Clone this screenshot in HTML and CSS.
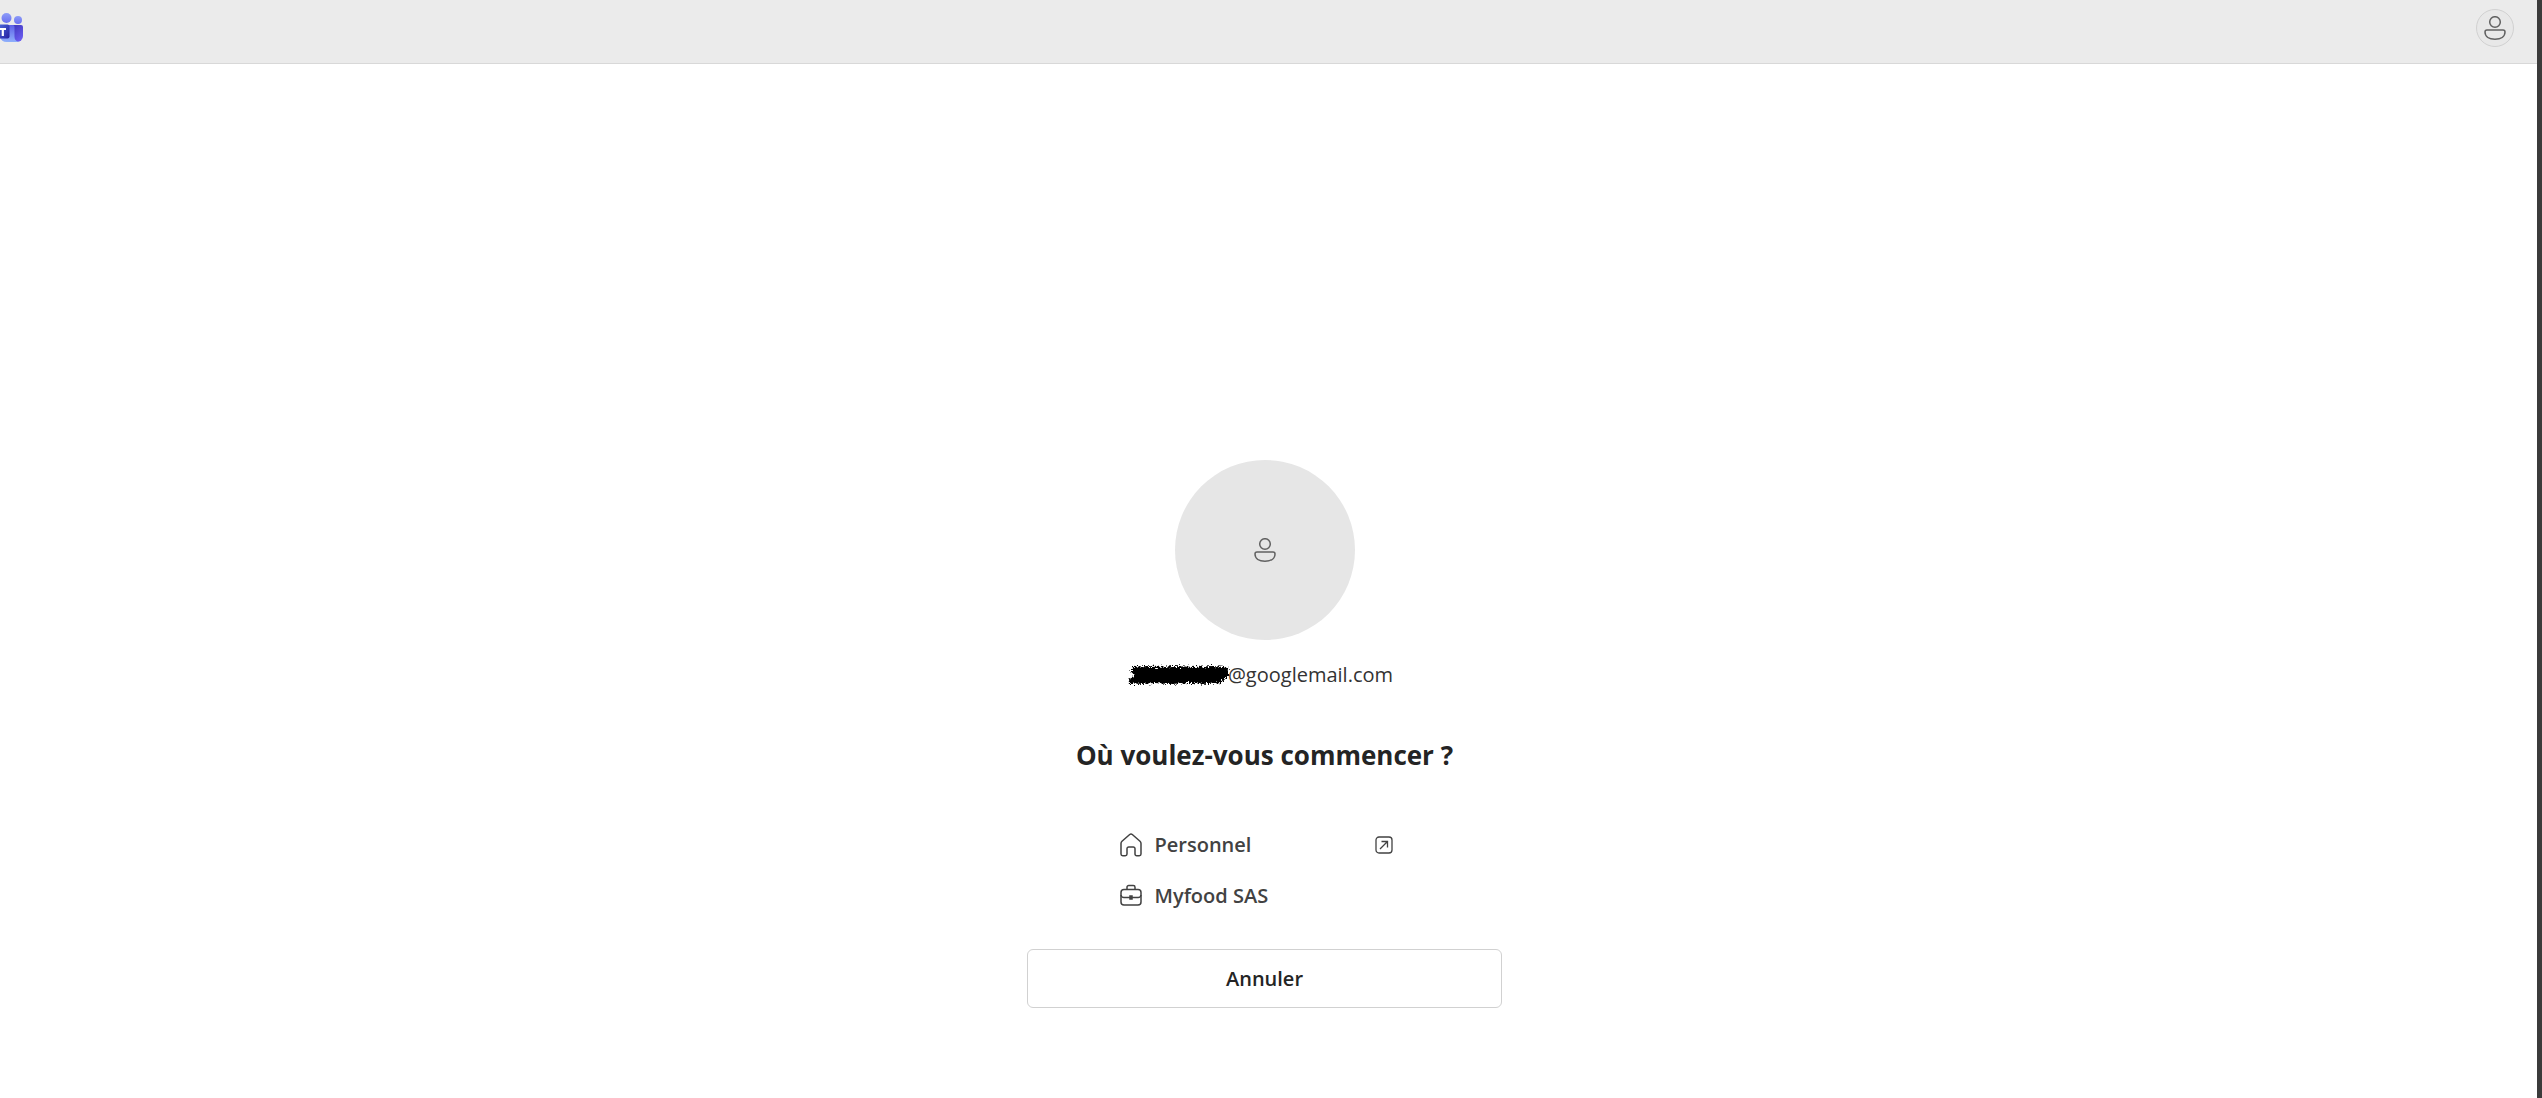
FILE: index.html
```
<!doctype html>
<html lang="fr">
  <head>
    <meta charset="UTF-8" />
    <title>Microsoft Teams</title>
    <link rel="stylesheet" href="styles.css">
  </head>
  <body>
    <header class="topbar">
      <svg class="logo" viewBox="0 0 24 30" aria-label="Teams">
        <defs>
          <linearGradient id="head" x1="0" y1="0" x2="0" y2="1">
            <stop offset="0" stop-color="#8d9cf8" />
            <stop offset="1" stop-color="#6a6ff0" />
          </linearGradient>
          <linearGradient id="back" x1="0" y1="0" x2="0.6" y2="1">
            <stop offset="0" stop-color="#3b35b8" />
            <stop offset="1" stop-color="#6b5cf0" />
          </linearGradient>
          <linearGradient id="front" x1="0" y1="0" x2="0" y2="1">
            <stop offset="0" stop-color="#5d5fe8" />
            <stop offset="1" stop-color="#8fb0fb" />
          </linearGradient>
          <linearGradient id="tile" x1="0" y1="0" x2="1" y2="1">
            <stop offset="0" stop-color="#4a63d8" />
            <stop offset="1" stop-color="#2420a0" />
          </linearGradient>
        </defs>
        <circle cx="18" cy="7" r="4" fill="url(#head)" />
        <circle cx="6.500" cy="5" r="5" fill="url(#head)" />
        <path d="M12 12h9a2 2 0 0 1 2 2v9a6 6 0 0 1-6 6h-5z" fill="url(#back)" />
        <path d="M0 12h13a1.500 1.500 0 0 1 1.500 1.500V24a5 5 0 0 0 5 5H7a7 7 0 0 1-7-5z" fill="url(#front)" />
        <path d="M0 11.500h7.500a2 2 0 0 1 2 2v10a2 2 0 0 1-2 2H0z" fill="url(#tile)" />
        <path d="M0 16h6M2.800 16V23" fill="none" stroke="#fff" stroke-width="2.200" />
      </svg>
      <button class="profile" type="button" aria-label="Profil">
        <svg class="person" viewBox="0 0 22 24">
          <circle cx="11" cy="6" r="5.300" />
          <path d="M3 14h16a2 2 0 0 1 2 2c0 4.500-4 7.200-10 7.200S1 20.500 1 16a2 2 0 0 1 2-2z" />
        </svg>
      </button>
    </header>
    <main class="content">
      <div class="avatar">
        <svg class="person" viewBox="0 0 22 24">
          <circle cx="11" cy="6" r="5.300" />
          <path d="M3 14h16a2 2 0 0 1 2 2c0 4.500-4 7.200-10 7.200S1 20.500 1 16a2 2 0 0 1 2-2z" />
        </svg>
      </div>
      <p class="email">
        <svg class="scribble" viewBox="0 0 100 20" aria-hidden="true">
          <filter id="grain" x="-5%" y="-20%" width="110%" height="140%">
            <feTurbulence type="fractalNoise" baseFrequency="0.6" numOctaves="2" seed="4" />
            <feDisplacementMap in="SourceGraphic" scale="8" xChannelSelector="R" yChannelSelector="G" />
          </filter>
          <path filter="url(#grain)" d="M4 2l15-1 9 1 18-1 20 1 18-1 14 1 3 4-1 5-4 3-3 4-12 1-20-1-20 1-14-1-13 1-13-1-1-3 4-3 3-2-4-3z" />
        </svg>
        <span>@googlemail.com</span>
      </p>
      <h1>Où voulez-vous commencer ?</h1>
      <nav class="choices">
        <a class="choice" href="#">
          <svg class="icon" viewBox="0 0 22 24">
            <path d="M1 10.500a3 3 0 0 1 1-2.200l7.700-6.800a2 2 0 0 1 2.600 0L20 8.300a3 3 0 0 1 1 2.200V21a1.700 1.700 0 0 1-1.700 1.700h-2.600A1.700 1.700 0 0 1 15 21v-5.300a1.700 1.700 0 0 0-1.700-1.700H8.700A1.700 1.700 0 0 0 7 15.700V21a1.700 1.700 0 0 1-1.700 1.700H2.700A1.700 1.700 0 0 1 1 21z" />
          </svg>
          <span>Personnel</span>
          <svg class="open" viewBox="0 0 18 18">
            <rect x="1" y="1" width="16" height="16" rx="3" />
            <path d="M5 13l7.500-7.500M6.500 5.500h6v6" />
          </svg>
        </a>
        <a class="choice" href="#">
          <svg class="icon" viewBox="0 0 22 24">
            <path d="M7 5.500V3.200A1.700 1.700 0 0 1 8.700 1.500h4.600A1.700 1.700 0 0 1 15 3.200V5.500" />
            <rect x="1" y="5.500" width="20" height="15.500" rx="3" />
            <path d="M1 11a3 3 0 0 0 3 2.500h14a3 3 0 0 0 3-2.500" />
            <rect class="clasp" x="10" y="12" width="2" height="3" />
          </svg>
          <span>Myfood SAS</span>
        </a>
      </nav>
      <button class="cancel" type="button">Annuler</button>
    </main>
  </body>
</html>
```

FILE: styles.css
```
* {
  box-sizing: border-box;
}
html {
  min-height: 100%;
  display: flex;
}
body {
  flex: 1;
  margin: 0;
  background: #fff;
  border-right: 5px solid #3b3b3b;
  color: #242424;
  font-family: "Open Sans", "Noto Sans", sans-serif;
}
svg {
  display: block;
  flex: none;
}
.topbar {
  display: flex;
  align-items: center;
  justify-content: space-between;
  height: 64px;
  padding: 0 23px 8px 0;
  background: #ebebeb;
  border-bottom: 1px solid #d8d8d8;
}
.logo {
  width: 24px;
  height: 30px;
}
.profile {
  display: flex;
  align-items: center;
  justify-content: center;
  width: 38px;
  height: 38px;
  padding: 0;
  background: #e8e8e8;
  border: 1px solid #d1d1d1;
  border-radius: 50%;
}
.person {
  width: 22px;
  height: 24px;
  fill: none;
  stroke: #616161;
  stroke-width: 1.500;
}
.content {
  display: flex;
  flex-direction: column;
  align-items: center;
  padding: 396px 8px 40px 0;
}
.avatar {
  display: flex;
  align-items: center;
  justify-content: center;
  width: 180px;
  height: 180px;
  background: #e6e6e6;
  border-radius: 50%;
}
.email {
  display: flex;
  align-items: center;
  margin: 20px 0 0;
  padding-right: 8px;
  font-size: 20px;
  line-height: 30px;
  color: #333;
}
.scribble {
  width: 100px;
  height: 20px;
  overflow: visible;
}
h1 {
  margin: 47px 0 0;
  font-size: 26px;
  font-weight: 700;
  line-height: 36px;
}
.choices {
  width: 292px;
  margin-top: 46px;
}
.choice {
  display: flex;
  align-items: center;
  height: 51px;
  padding: 0 18px 0 1px;
  color: #424242;
  font-size: 20px;
  font-weight: 600;
  text-decoration: none;
}
.icon {
  width: 22px;
  height: 24px;
  margin-right: 13px;
  fill: none;
  stroke: #424242;
  stroke-width: 1.500;
}
.clasp {
  fill: #424242;
}
.open {
  width: 18px;
  height: 18px;
  margin-left: auto;
  fill: none;
  stroke: #424242;
  stroke-width: 1.300;
}
.cancel {
  width: 475px;
  height: 59px;
  margin-top: 28px;
  background: #fff;
  border: 1px solid #d1d1d1;
  border-radius: 6px;
  color: #242424;
  font-family: inherit;
  font-size: 20px;
  font-weight: 600;
}
```
